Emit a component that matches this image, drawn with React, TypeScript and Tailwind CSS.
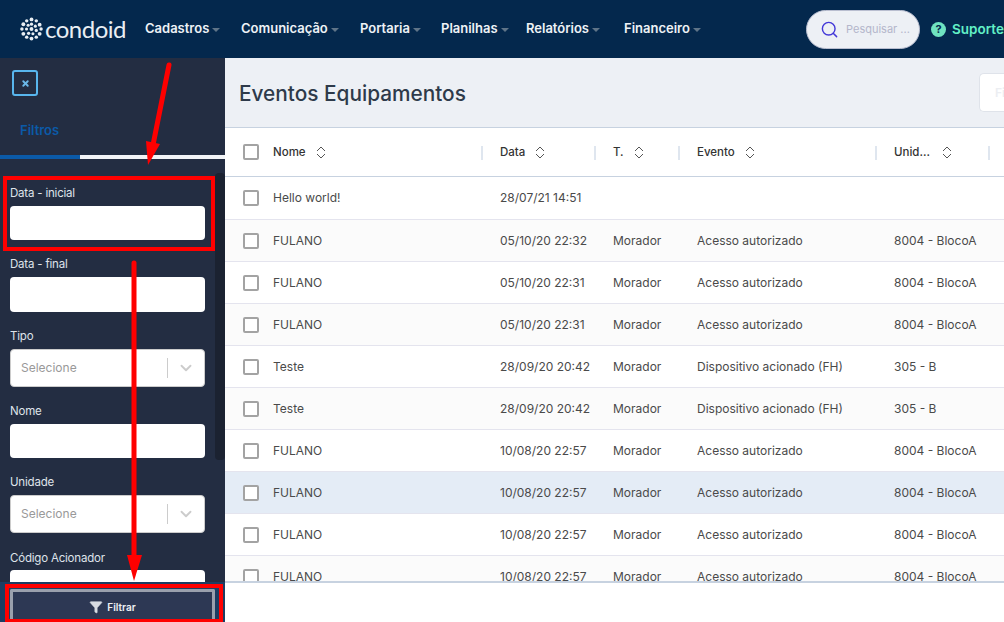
import { ChevronDown, Filter, Search, X } from "lucide-react";

const rows = [
  { nome: "Hello world!", data: "28/07/21 14:51", tipo: "", evento: "", unidade: "" },
  { nome: "FULANO", data: "05/10/20 22:32", tipo: "Morador", evento: "Acesso autorizado", unidade: "8004 - BlocoA" },
  { nome: "FULANO", data: "05/10/20 22:31", tipo: "Morador", evento: "Acesso autorizado", unidade: "8004 - BlocoA" },
  { nome: "FULANO", data: "05/10/20 22:31", tipo: "Morador", evento: "Acesso autorizado", unidade: "8004 - BlocoA" },
  { nome: "Teste", data: "28/09/20 20:42", tipo: "Morador", evento: "Dispositivo acionado (FH)", unidade: "305 - B" },
  { nome: "Teste", data: "28/09/20 20:42", tipo: "Morador", evento: "Dispositivo acionado (FH)", unidade: "305 - B" },
  { nome: "FULANO", data: "10/08/20 22:57", tipo: "Morador", evento: "Acesso autorizado", unidade: "8004 - BlocoA" },
  { nome: "FULANO", data: "10/08/20 22:57", tipo: "Morador", evento: "Acesso autorizado", unidade: "8004 - BlocoA" },
  { nome: "FULANO", data: "10/08/20 22:57", tipo: "Morador", evento: "Acesso autorizado", unidade: "8004 - BlocoA" },
  { nome: "FULANO", data: "10/08/20 22:57", tipo: "Morador", evento: "Acesso autorizado", unidade: "8004 - BlocoA" },
];

const menu = [
  { label: "Cadastros", width: "w-[96px]" },
  { label: "Comunicação", width: "w-[119px]" },
  { label: "Portaria", width: "w-[81px]" },
  { label: "Planilhas", width: "w-[85px]" },
  { label: "Relatórios", width: "w-[98px]" },
  { label: "Financeiro", width: "w-[90px]" },
];

const gridCols = "grid grid-cols-[48px_227px_113px_84px_197px_113px]";

const Logo = () => (
  <svg width="23" height="24" viewBox="0 0 24 24" fill="#e9eef3">
    {[
      [12, 2, 2], [17, 3.5, 1.8], [20.5, 7.5, 2], [22, 12, 1.8], [20.5, 17, 2], [17, 20.5, 1.8],
      [12, 22, 2], [7, 20.5, 1.8], [3.5, 17, 2], [2, 12, 1.8], [3.5, 7, 2], [7, 3.5, 1.8],
      [12, 7, 1.7], [16, 9, 1.6], [17, 13.5, 1.7], [13.5, 17, 1.6], [9, 16.5, 1.7], [6.8, 12, 1.6],
      [8.5, 8, 1.6], [12, 12, 2],
    ].map(([cx, cy, r], i) => (
      <circle key={i} cx={cx} cy={cy} r={r} />
    ))}
  </svg>
);

const SortIcon = () => (
  <svg width="10" height="13" viewBox="0 0 10 13" fill="none" stroke="#555" strokeWidth="1">
    <path d="M1 5L5 1L9 5" />
    <path d="M1 8L5 12L9 8" />
  </svg>
);

const Checkbox = () => <span className="block w-4 h-4 border-2 border-[#a3a3a3] rounded-[2px] bg-white" />;

const HeaderCell = ({ label, iconGap = "ml-[10px]" }: { label: string; iconGap?: string }) => (
  <div className="flex items-center h-full">
    <span className="text-[#333] text-[11.5px] font-medium mt-[1px]">{label}</span>
    <span className={`${iconGap} mt-[1px]`}>
      <SortIcon />
    </span>
    <span className="ml-auto mr-[17px] w-[2px] h-[14px] mt-[1px] bg-[#dfe6ef]" />
  </div>
);

const labelClass = "block text-[#dfe3ea] text-[11.5px] leading-[16px] tracking-[-0.2px]";

const TextField = ({ label, top, height, gap = "mb-[5px]" }: { label: string; top: string; height: string; gap?: string }) => (
  <div className={top}>
    <label className={`${labelClass} ${gap}`}>{label}</label>
    <div className={`bg-white rounded-[4px] ${height}`} />
  </div>
);

const SelectField = ({ label, top }: { label: string; top: string }) => (
  <div className={top}>
    <label className={`${labelClass} mb-[5px]`}>{label}</label>
    <div className="flex items-center h-[38px] bg-white border border-[#ccc] rounded-[4px] pl-[10px]">
      <span className="flex-1 text-[#999] text-[12px]">Selecione</span>
      <span className="w-px h-[20px] bg-[#ccc]" />
      <ChevronDown size={18} strokeWidth={2.5} className="mx-[9px] text-[#ccc]" />
    </div>
  </div>
);

export default function App() {
  return (
    <div className="relative w-[1004px] h-[622px] overflow-hidden bg-white font-['Inter',sans-serif]">
      <header className="flex items-center h-[58px] bg-[#04284d] pl-[20px]">
        <div className="flex items-center w-[125px] shrink-0">
          <Logo />
          <span className="ml-[2px] text-[#e9eef3] text-[24px] tracking-[-0.5px] font-['Lato',sans-serif]">condoid</span>
        </div>
        <nav className="flex items-center">
          {menu.map((m) => (
            <div key={m.label} className={`flex items-center ${m.width}`}>
              <span className="text-[#eef2f6] text-[13px] font-semibold">{m.label}</span>
              <span className="ml-[3px] mt-[2px] w-0 h-0 border-x-[4px] border-x-transparent border-t-[4px] border-t-[#5f7488]" />
            </div>
          ))}
        </nav>
        <div className="flex items-center ml-[92px] w-[114px] h-[39px] rounded-full bg-[#edf0f5] border border-[#b9bed0] pl-[13px] shrink-0">
          <Search size={19} strokeWidth={1.8} className="text-[#4338d8]" />
          <span className="ml-[7px] text-[#b4b6cb] text-[11px] whitespace-nowrap">Pesquisar ...</span>
        </div>
        <div className="flex items-center ml-[11px] shrink-0">
          <span className="flex items-center justify-center w-[15px] h-[15px] rounded-full bg-[#6fe3c0] text-[#04284d] text-[11px] font-bold">?</span>
          <span className="ml-[6px] text-[#62f0c6] text-[13.5px] font-semibold">Suporte</span>
        </div>
      </header>

      <div className="flex h-[564px]">
        <aside className="flex flex-col w-[225px] shrink-0 bg-[#232d42]">
          <div className="h-[97px] shrink-0 pl-[12px] pt-[12px]">
            <div className="flex items-center justify-center w-[26px] h-[26px] border-2 border-[#58b6ee] rounded-[3px]">
              <X size={9} strokeWidth={5} className="text-[#6bb8e8]" />
            </div>
            <div className="ml-[8px] mt-[25px] text-[#0b5aa8] text-[13px] font-semibold">Filtros</div>
          </div>
          <div className="flex h-[4px] shrink-0 bg-[#f2f4f7]">
            <div className="w-[80px] bg-[#0b5aa8]" />
          </div>
          <div className="flex flex-1 min-h-0">
            <div className="w-[215px] px-[10px] overflow-hidden">
              <TextField label="Data - inicial" top="mt-[26px]" height="h-[34px]" />
              <TextField label="Data - final" top="mt-[16px]" height="h-[35px]" />
              <SelectField label="Tipo" top="mt-[16px]" />
              <TextField label="Nome" top="mt-[16px]" height="h-[34px]" />
              <SelectField label="Unidade" top="mt-[16px]" />
              <TextField label="Código Acionador" top="mt-[17px]" height="h-[40px]" gap="mb-[4px]" />
            </div>
            <div className="w-[10px] mt-[14px]">
              <div className="h-[287px] bg-[#1b2231] rounded-[4px]" />
            </div>
          </div>
          <div className="h-[40px] shrink-0 bg-[#1c3d63] pl-[10px] pr-[10px] pt-[7px]">
            <button className="flex items-center justify-center gap-[4px] w-full h-full bg-[#2d3854] border-x-[3px] border-t-[3px] border-[#9aa0ad] rounded-t-[2px] text-[#eef0f4] text-[10px] font-semibold">
              <Filter size={14} fill="#d8dce3" strokeWidth={1} className="text-[#d8dce3]" />
              Filtrar
            </button>
          </div>
        </aside>

        <main className="flex flex-col flex-1 min-w-0">
          <div className="flex items-center justify-between h-[70px] shrink-0 bg-[#edf0f5] border-b border-[#c7d2e0] pl-[14px]">
            <h1 className="text-[#2e3a4a] text-[20.8px] font-medium mt-[2px]">Eventos Equipamentos</h1>
            <div className="flex items-center w-[25px] h-[39px] bg-white border border-[#dfe3ea] border-r-0 rounded-l-[5px] pl-[15px] overflow-hidden">
              <span className="text-[#eceef2] text-[12px] font-semibold">Fi</span>
            </div>
          </div>

          <div className="h-[455px] shrink-0 overflow-hidden border-b-2 border-[#c7d2e0]">
            <div className={`${gridCols} h-[49px] items-center border-b border-[#c7d2e0]`}>
              <div className="pl-[18px]">
                <Checkbox />
              </div>
              <HeaderCell label="Nome" />
              <HeaderCell label="Data" />
              <HeaderCell label="T." />
              <HeaderCell label="Evento" />
              <HeaderCell label="Unid..." iconGap="ml-[12px]" />
            </div>
            {rows.map((r, i) => (
              <div
                key={i}
                className={`${gridCols} ${i === 0 ? "h-[43px]" : "h-[42px]"} items-center border-b border-[#e4e4ee] text-[#4a4a4a] text-[12px] ${
                  i === 7 ? "bg-[#e4ecf6]" : i % 2 === 1 ? "bg-[#fbfbfb]" : "bg-white"
                }`}
              >
                <div className="pl-[18px]">
                  <Checkbox />
                </div>
                <span>{r.nome}</span>
                <span>{r.data}</span>
                <span>{r.tipo}</span>
                <span>{r.evento}</span>
                <span className="whitespace-nowrap">{r.unidade}</span>
              </div>
            ))}
          </div>
        </main>
      </div>

      {/* marcações em vermelho por cima da tela */}
      <div className="absolute left-[3px] top-[176px] w-[212px] h-[75px] border-4 border-[#ff0000]" />
      <div className="absolute left-[5px] top-[584px] w-[218px] h-[38px] border-4 border-b-[3px] border-[#ff0000]" />
      <svg className="absolute left-0 top-0 pointer-events-none" width="240" height="622" viewBox="0 0 240 622" fill="#ff0000">
        <path d="M169 65L153 145" stroke="#ff0000" strokeWidth="5" strokeLinecap="round" />
        <path d="M146 141L160 144L148 165Z" />
        <path d="M134 263V560" stroke="#ff0000" strokeWidth="5" strokeLinecap="round" />
        <path d="M127 555H142L134 581Z" />
      </svg>
    </div>
  );
}
